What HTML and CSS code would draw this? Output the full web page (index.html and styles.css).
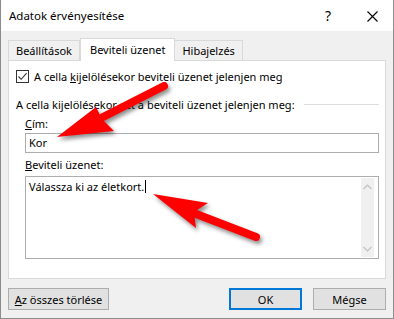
FILE: index.html
```html
<!DOCTYPE html>
<html>
<head>
  <link rel="stylesheet" href="styles.css">
</head>
<body>
  <div class="window">
    <div class="titlebar">
      <span class="title">Adatok érvényesítése</span>
      <span class="help">?</span>
      <svg class="close" width="11" height="11" viewBox="0 0 11 11"><path d="M0.5 0.5 L10.5 10.5 M10.5 0.5 L0.5 10.5" stroke="#000" stroke-width="1.1" fill="none"/></svg>
    </div>
    <div class="content">
      <div class="tabs">
        <div class="tab">Beállítások</div>
        <div class="tab active">Beviteli üzenet</div>
        <div class="tab">Hibajelzés</div>
      </div>
      <div class="panel">
        <label class="check-row">
          <span class="checkbox">
            <svg width="11" height="11" viewBox="0 0 11 11"><path d="M1.5 5.5 L4.2 8.3 L9.6 2.2" stroke="#333" stroke-width="1.1" fill="none"/></svg>
          </span>
          <span>A cella <u>k</u>ijelölésekor beviteli üzenet jelenjen meg</span>
        </label>
        <div class="group-title">
          <span>A cella kijelölésekor ezt a beviteli üzenet jelenjen meg:</span>
          <span class="rule"></span>
        </div>
        <div class="field-label"><u>C</u>ím:</div>
        <div class="input">Kor</div>
        <div class="field-label"><u>B</u>eviteli üzenet:</div>
        <div class="textarea">
          <div class="text">Válassza ki az életkort.<span class="caret"></span></div>
          <div class="scrollbar">
            <svg width="9" height="6" viewBox="0 0 9 6"><path d="M0.5 5 L4.5 1 L8.5 5" stroke="#c2c2c2" stroke-width="1.2" fill="none"/></svg>
            <svg width="9" height="6" viewBox="0 0 9 6"><path d="M0.5 1 L4.5 5 L8.5 1" stroke="#c2c2c2" stroke-width="1.2" fill="none"/></svg>
          </div>
        </div>
      </div>
      <div class="buttons">
        <button class="btn wide"><u>A</u>z összes törlése</button>
        <span class="spacer"></span>
        <button class="btn primary">OK</button>
        <button class="btn">Mégse</button>
      </div>
    </div>
    <!-- piros nyilak a képernyőkép fölött -->
    <svg class="arrows" width="394" height="319" viewBox="0 0 394 319">
      <g fill="#ff0000">
        <line x1="102" y1="117" x2="163" y2="86" stroke="#ff0000" stroke-width="8" stroke-linecap="round"/>
        <polygon points="56,137 95,107 101,119 113,131"/>
        <line x1="190" y1="212" x2="255" y2="237" stroke="#ff0000" stroke-width="8" stroke-linecap="round"/>
        <polygon points="152,194 207,203 193,212 195,228"/>
      </g>
    </svg>
  </div>
</body>
</html>
```

FILE: styles.css
```css
body {
  margin: 0;
  font-family: 'Noto Sans', 'Open Sans', sans-serif;
  font-size: 11px;
  color: #000;
  background: #fff;
}
.window {
  position: relative;
  width: 394px;
  height: 319px;
  box-sizing: border-box;
  border: 1px solid #8c8c8c;
  border-top: 0;
  background: #f0f0f0;
  display: flex;
  flex-direction: column;
}
.titlebar {
  height: 31px;
  background: #fff;
  display: flex;
  align-items: center;
  padding: 0 15px 0 8px;
}
.title {
  flex: 1;
  font-size: 11.5px;
}
.help {
  font-size: 14px;
  margin-right: 36px;
}
.close {
  margin-top: 1px;
}
.content {
  flex: 1;
  padding: 6px 7px 0 7px;
  display: flex;
  flex-direction: column;
}
.tabs {
  display: flex;
  height: 23px;
  align-items: flex-end;
  position: relative;
  z-index: 1;
}
.tab {
  height: 20px;
  box-sizing: border-box;
  border: 1px solid #d9d9d9;
  border-bottom: 0;
  padding: 0 7px;
  line-height: 20px;
  background: #f0f0f0;
}
.tab + .tab {
  border-left: 0;
}
.tab.active {
  height: 23px;
  background: #fff;
  border-left: 1px solid #d9d9d9;
  padding: 0 9px;
  line-height: 21px;
  margin-bottom: -1px;
}
.tab.active + .tab {
  border-left: 0;
}
.panel {
  height: 219px;
  box-sizing: border-box;
  background: #fff;
  border: 1px solid #d9d9d9;
  padding: 8px 6px 0 7px;
  display: flex;
  flex-direction: column;
}
.check-row {
  display: flex;
  align-items: center;
  gap: 5px;
  height: 15px;
}
.checkbox {
  width: 13px;
  height: 13px;
  box-sizing: border-box;
  border: 1px solid #333;
  display: flex;
  align-items: center;
  justify-content: center;
}
.group-title {
  display: flex;
  align-items: center;
  gap: 9px;
  margin-top: 12px;
  height: 16px;
}
.rule {
  flex: 1;
  height: 1px;
  background: #dcdcdc;
}
.field-label {
  margin: 4px 0 0 9px;
  height: 16px;
  line-height: 16px;
}
.input {
  margin: 1px 0 0 9px;
  height: 20px;
  box-sizing: border-box;
  border: 1px solid #adadad;
  padding: 0 3px;
  line-height: 18px;
}
.textarea {
  margin: 3px 0 0 9px;
  height: 83px;
  box-sizing: border-box;
  border: 1px solid #adadad;
  display: flex;
  padding: 1px 4px 1px 3px;
}
.text {
  flex: 1;
  line-height: 16px;
  padding-top: 1px;
}
.caret {
  display: inline-block;
  width: 1px;
  height: 13px;
  background: #000;
  vertical-align: -2px;
  margin-left: 1px;
}
.scrollbar {
  width: 13px;
  background: #f0f0f0;
  display: flex;
  flex-direction: column;
  justify-content: space-between;
  align-items: center;
  padding: 6px 0 5px;
}
.buttons {
  display: flex;
  margin-top: 9px;
  gap: 11px;
}
.spacer {
  flex: 1;
}
.btn {
  font-family: inherit;
  font-size: 11px;
  height: 22px;
  width: 73px;
  padding: 0;
  background: #e1e1e1;
  border: 1px solid #adadad;
  color: #000;
}
.btn.wide {
  width: 101px;
}
.btn.primary {
  border: 2px solid #0078d7;
}
.arrows {
  position: absolute;
  left: 0;
  top: 0;
  filter: drop-shadow(2px 3px 2px rgba(0, 0, 0, 0.45));
}
```
